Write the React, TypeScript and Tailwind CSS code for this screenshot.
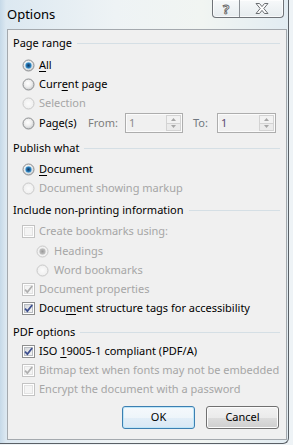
import type React from "react";

const Radio: React.FC<{ checked?: boolean; disabled?: boolean }> = ({
  checked,
  disabled
}) => (
  <svg width="13" height="13" viewBox="0 0 13 13" className="shrink-0">
    <circle
      cx="6.5"
      cy="6.5"
      r="5.5"
      fill={disabled ? "url(#radioBgOff)" : "url(#radioBg)"}
      stroke={disabled ? "#c9c9c9" : "#8c8e90"}
    />
    {checked && (
      <circle
        cx="6.5"
        cy="6.5"
        r="3.2"
        fill={disabled ? "url(#radioDotOff)" : "url(#radioDot)"}
      />
    )}
  </svg>
);

const Check: React.FC<{ checked?: boolean; disabled?: boolean }> = ({
  checked,
  disabled
}) => (
  <svg width="13" height="13" viewBox="0 0 13 13" className="shrink-0">
    <rect
      x="0.5"
      y="0.5"
      width="12"
      height="12"
      fill="#fff"
      stroke={disabled ? "#c3c3c3" : "#8e8f8f"}
    />
    <rect
      x="2.5"
      y="2.5"
      width="8"
      height="8"
      fill={disabled ? "#f4f4f4" : "url(#checkBg)"}
      stroke={disabled ? "#e2e2e2" : "#b9bdc2"}
    />
    {checked && (
      <path
        d="M3 6.6 L5.4 9.1 L10.2 3"
        fill="none"
        stroke={disabled ? "#b0b0b0" : "#3d4f8f"}
        strokeWidth="1.7"
      />
    )}
  </svg>
);

const Option: React.FC<{
  control: React.ReactNode;
  disabled?: boolean;
  nested?: boolean;
  className?: string;
  children: React.ReactNode;
}> = ({ control, disabled, nested, className = "", children }) => (
  <div
    className={`flex h-[19px] items-center ${nested ? "pl-[28px]" : "pl-[14px]"} ${className}`}
  >
    {control}
    <span
      className={`${nested ? "ml-[5px]" : "ml-[4px]"} whitespace-nowrap ${disabled ? "text-[#a6a6a6]" : "text-black"}`}
    >
      {children}
    </span>
  </div>
);

const Header: React.FC<{ title: string; className?: string }> = ({
  title,
  className = ""
}) => (
  <div className={`flex h-[19px] items-center pl-[5px] pr-[6px] ${className}`}>
    <span className="whitespace-nowrap text-black">{title}</span>
    <div className="ml-[5px] h-px flex-1 bg-[#d5dfe5]" />
  </div>
);

const Key: React.FC<{ children: React.ReactNode }> = ({ children }) => (
  <span className="underline decoration-[1px] underline-offset-[2px]">
    {children}
  </span>
);

const Spin: React.FC<{ value: string; dark?: boolean; width: string }> = ({
  value,
  dark,
  width
}) => (
  <div
    className={`flex h-[20px] ${width} border border-[#adadad] bg-[#f0f0f0] shadow-[inset_0_0_0_1px_#fbfbfb]`}
  >
    <span
      className={`flex-1 pl-[3px] leading-[18px] ${dark ? "text-[#5b4a70]" : "text-[#8c8c8c]"}`}
    >
      {value}
    </span>
    <div className="my-[1px] mr-[1px] flex w-[15px] flex-col">
      <div className="flex flex-1 items-center justify-center border border-[#d3d3d3] bg-[#f2f2f2]">
        <svg width="5" height="3" viewBox="0 0 5 3">
          <path d="M0 3 L2.5 0 L5 3 Z" fill="#a6a6a6" />
        </svg>
      </div>
      <div className="flex flex-1 items-center justify-center border border-t-0 border-[#d3d3d3] bg-[#ebebeb]">
        <svg width="5" height="3" viewBox="0 0 5 3">
          <path d="M0 0 L2.5 3 L5 0 Z" fill="#a6a6a6" />
        </svg>
      </div>
    </div>
  </div>
);

export default function App() {
  return (
    <div className="h-[445px] w-[293px] overflow-hidden bg-[#eef3f6] font-['Noto_Sans',sans-serif] text-[11px]">
      <svg width="0" height="0" className="absolute">
        <defs>
          <radialGradient id="radioBg" cx="0.45" cy="0.4" r="0.6">
            <stop offset="0" stopColor="#ffffff" />
            <stop offset="0.55" stopColor="#eeeeee" />
            <stop offset="1" stopColor="#c8cacc" />
          </radialGradient>
          <radialGradient id="radioBgOff" cx="0.5" cy="0.5" r="0.6">
            <stop offset="0" stopColor="#fbfbfb" />
            <stop offset="1" stopColor="#ececec" />
          </radialGradient>
          <radialGradient id="radioDot" cx="0.5" cy="0.5" r="0.55">
            <stop offset="0" stopColor="#143a60" />
            <stop offset="0.5" stopColor="#1d66a2" />
            <stop offset="1" stopColor="#5cb4e8" />
          </radialGradient>
          <radialGradient id="radioDotOff" cx="0.5" cy="0.5" r="0.55">
            <stop offset="0" stopColor="#9a9a9a" />
            <stop offset="1" stopColor="#c8c8c8" />
          </radialGradient>
          <linearGradient id="checkBg" x1="0" y1="0" x2="1" y2="1">
            <stop offset="0" stopColor="#d3d6da" />
            <stop offset="1" stopColor="#f7f7f7" />
          </linearGradient>
        </defs>
      </svg>

      <div className="flex h-[444px] w-[289px] flex-col rounded-br-[6px] border-r border-b border-[#5a6066] bg-[linear-gradient(90deg,#c6d9e8_0px,#dce8f1_6px,#eef3f5_40%,#f1f5f2_70%,#e2ecf2_100%)]">
        <div className="flex h-[29px] shrink-0 pl-[7px] pr-[4px]">
          <span className="self-center text-[13px] leading-none text-black">
            Options
          </span>
          <div className="flex-1" />
          <div className="flex h-[18px] rounded-b-[4px] border border-t-0 border-[#6f7378] bg-[linear-gradient(#f7f9fa,#e6ecef)] shadow-[inset_0_0_0_1px_rgba(255,255,255,0.7)]">
            <div className="flex w-[27px] items-start justify-center border-r border-[#8a8f94] pt-[2px] text-[13px] font-bold leading-[14px] text-white [-webkit-text-stroke:0.9px_#686868]">
              ?
            </div>
            <div className="flex w-[43px] items-center justify-center">
              <svg width="14" height="11" viewBox="0 0 14 11">
                <path
                  d="M1 0.5 H4.5 L7 3.6 L9.5 0.5 H13 L8.8 5.5 L13 10.5 H9.5 L7 7.4 L4.5 10.5 H1 L5.2 5.5 Z"
                  fill="#fdfdfd"
                  stroke="#6b6f73"
                  strokeWidth="1"
                  strokeLinejoin="round"
                />
              </svg>
            </div>
          </div>
        </div>

        <div className="ml-[7px] flex h-[411px] w-[280px] flex-col border border-[#a4a9ae] bg-[#f0f0f0] pt-[4px]">
          <Header title="Page range" />
          <Option control={<Radio checked />} className="mt-[3px]">
            <Key>A</Key>ll
          </Option>
          <Option control={<Radio />}>
            Curr<Key>e</Key>nt page
          </Option>
          <Option control={<Radio disabled />} disabled>
            Selection
          </Option>
          <div className="flex h-[20px] items-center pl-[14px]">
            <Radio />
            <span className="ml-[4px] w-[49px] whitespace-nowrap text-black">
              Pa<Key>g</Key>e(s)
            </span>
            <span className="w-[37px] text-[#7d7d7d]">From:</span>
            <Spin value="1" width="w-[58px]" />
            <span className="ml-[10px] w-[24px] text-[#707880]">To:</span>
            <Spin value="1" dark width="w-[59px]" />
          </div>

          <Header title="Publish what" className="mt-[6px]" />
          <Option control={<Radio checked />} className="mt-[2px]">
            <Key>D</Key>ocument
          </Option>
          <Option control={<Radio disabled />} disabled>
            Document showing markup
          </Option>

          <Header title="Include non-printing information" className="mt-[3px]" />
          <Option control={<Check disabled />} disabled className="mt-[2px]">
            Create bookmarks using:
          </Option>
          <Option control={<Radio checked disabled />} disabled nested className="mt-px">
            Headings
          </Option>
          <Option control={<Radio disabled />} disabled nested>
            Word bookmarks
          </Option>
          <Option control={<Check checked disabled />} disabled>
            Document properties
          </Option>
          <Option control={<Check checked />}>
            Docu<Key>m</Key>ent structure tags for accessibility
          </Option>

          <Header title="PDF options" className="mt-[5px]" />
          <Option control={<Check checked />}>
            ISO <Key>1</Key>9005-1 compliant (PDF/A)
          </Option>
          <Option control={<Check checked disabled />} disabled>
            Bitmap text when fonts may not be embedded
          </Option>
          <Option control={<Check disabled />} disabled>
            Encrypt the document with a password
          </Option>

          <div className="mt-[7px] flex justify-end gap-[11px] pr-[7px]">
            <button className="h-[23px] w-[73px] rounded-[3px] border border-[#3c7fb1] bg-[linear-gradient(#f5f9fc,#eef5fa_50%,#e2eef8_50%,#d9e8f4)] text-black shadow-[inset_0_0_0_1px_#bfe6f8]">
              OK
            </button>
            <button className="h-[23px] w-[73px] rounded-[3px] border border-[#707070] bg-[linear-gradient(#f2f2f2,#ebebeb_50%,#dddddd_50%,#cfcfcf)] text-black shadow-[inset_0_0_0_1px_#fcfcfc]">
              Cancel
            </button>
          </div>
        </div>
      </div>
    </div>
  );
}
